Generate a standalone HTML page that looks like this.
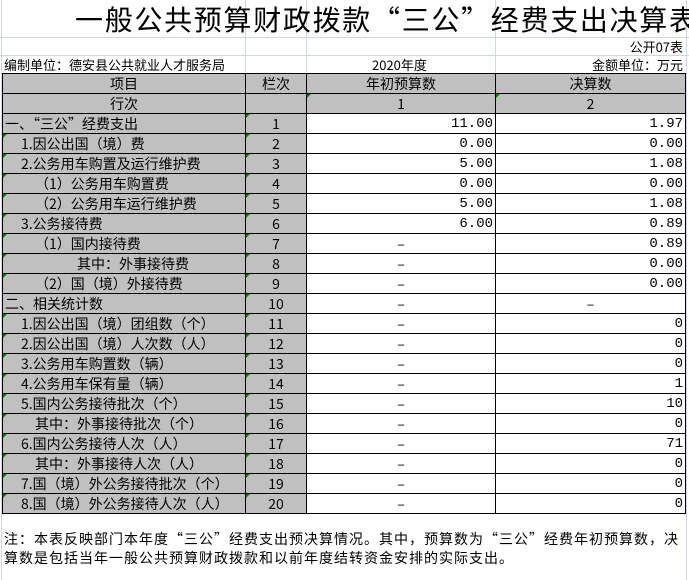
<!DOCTYPE html>
<html><head><meta charset="utf-8"><style>
*{margin:0;padding:0;box-sizing:border-box}
body{width:689px;height:580px;overflow:hidden;background:#fff;position:relative;font-family:"Noto Sans CJK SC","Liberation Sans",sans-serif;font-size:13px;color:#000}
.a{position:absolute;white-space:nowrap}
.vl{position:absolute;width:1px;background:#d0d7e5}
.hl{position:absolute;height:1px;background:#d0d7e5}
table{position:absolute;left:2px;top:73px;border-collapse:collapse;table-layout:fixed}
td{height:20px;border:1px solid #000;padding:0 2px;line-height:18px;white-space:nowrap;overflow:hidden;font-size:14px;position:relative}
.g{background:#c0c0c0}
.c{text-align:center}
.r{text-align:right;font-family:"Liberation Mono",monospace;font-size:14px}
.t::before{content:"";position:absolute;left:0;top:0;border-top:4px solid #008000;border-right:4px solid transparent}
.i1{padding-left:18px}.i2{padding-left:32px}.i3{padding-left:74px}.i4{padding-left:32px}
</style></head><body>
<div class="vl" style="left:245px;top:0;height:73px"></div>
<div class="vl" style="left:306px;top:0;height:73px"></div>
<div class="vl" style="left:495px;top:0;height:73px"></div>
<div class="vl" style="left:686px;top:0;height:580px"></div>
<div class="vl" style="left:1px;top:0;height:580px"></div>
<div class="hl" style="left:0;top:37px;width:689px"></div>
<div class="hl" style="left:0;top:55px;width:689px"></div>
<div class="a" style="left:75px;top:2px;font-size:28px;line-height:34px;letter-spacing:1.7px">一般公共预算财政拨款“三公”经费支出决算表</div>
<div class="a" style="right:6px;top:38px;font-size:13px;line-height:17px">公开07表</div>
<div class="a" style="left:4px;top:56px;font-size:13px;line-height:17px">编制单位：德安县公共就业人才服务局</div>
<div class="a" style="left:372px;top:56px;font-size:13px;line-height:17px">2020年度</div>
<div class="a" style="right:6px;top:56px;font-size:13px;line-height:17px">金额单位：万元</div>
<table>
<colgroup><col style="width:243px"><col style="width:61px"><col style="width:189px"><col style="width:190px"></colgroup>
<tr><td class="g c">项目</td><td class="g c">栏次</td><td class="g c">年初预算数</td><td class="g c">决算数</td></tr>
<tr><td class="g c">行次</td><td class="g c"></td><td class="g c t">1</td><td class="g c t">2</td></tr>
<tr><td class="g">一、“三公”经费支出</td><td class="g c t">1</td><td class="r">11.00</td><td class="r">1.97</td></tr>
<tr><td class="g t i1">1.因公出国（境）费</td><td class="g c t">2</td><td class="r">0.00</td><td class="r">0.00</td></tr>
<tr><td class="g t i1">2.公务用车购置及运行维护费</td><td class="g c t">3</td><td class="r">5.00</td><td class="r">1.08</td></tr>
<tr><td class="g t i2">（1）公务用车购置费</td><td class="g c t">4</td><td class="r">0.00</td><td class="r">0.00</td></tr>
<tr><td class="g t i2">（2）公务用车运行维护费</td><td class="g c t">5</td><td class="r">5.00</td><td class="r">1.08</td></tr>
<tr><td class="g t i1">3.公务接待费</td><td class="g c t">6</td><td class="r">6.00</td><td class="r">0.89</td></tr>
<tr><td class="g t i2">（1）国内接待费</td><td class="g c t">7</td><td class="c">–</td><td class="r">0.89</td></tr>
<tr><td class="g t i3">其中：外事接待费</td><td class="g c t">8</td><td class="c">–</td><td class="r">0.00</td></tr>
<tr><td class="g t i2">（2）国（境）外接待费</td><td class="g c t">9</td><td class="c">–</td><td class="r">0.00</td></tr>
<tr><td class="g">二、相关统计数</td><td class="g c t">10</td><td class="c">–</td><td class="c">–</td></tr>
<tr><td class="g t i1">1.因公出国（境）团组数（个）</td><td class="g c t">11</td><td class="c">–</td><td class="r">0</td></tr>
<tr><td class="g t i1">2.因公出国（境）人次数（人）</td><td class="g c t">12</td><td class="c">–</td><td class="r">0</td></tr>
<tr><td class="g t i1">3.公务用车购置数（辆）</td><td class="g c t">13</td><td class="c">–</td><td class="r">0</td></tr>
<tr><td class="g t i1">4.公务用车保有量（辆）</td><td class="g c t">14</td><td class="c">–</td><td class="r">1</td></tr>
<tr><td class="g t i1">5.国内公务接待批次（个）</td><td class="g c t">15</td><td class="c">–</td><td class="r">10</td></tr>
<tr><td class="g t i4">其中：外事接待批次（个）</td><td class="g c t">16</td><td class="c">–</td><td class="r">0</td></tr>
<tr><td class="g t i1">6.国内公务接待人次（人）</td><td class="g c t">17</td><td class="c">–</td><td class="r">71</td></tr>
<tr><td class="g t i4">其中：外事接待人次（人）</td><td class="g c t">18</td><td class="c">–</td><td class="r">0</td></tr>
<tr><td class="g t i1">7.国（境）外公务接待批次（个）</td><td class="g c t">19</td><td class="c">–</td><td class="r">0</td></tr>
<tr><td class="g t i1">8.国（境）外公务接待人次（人）</td><td class="g c t">20</td><td class="c">–</td><td class="r">0</td></tr>
</table>
<div class="a" style="left:4px;top:530px;font-size:14px;line-height:19px;letter-spacing:1px">注：本表反映部门本年度“三公”经费支出预决算情况。其中，预算数为“三公”经费年初预算数，决<br>算数是包括当年一般公共预算财政拨款和以前年度结转资金安排的实际支出。</div>
</body></html>
